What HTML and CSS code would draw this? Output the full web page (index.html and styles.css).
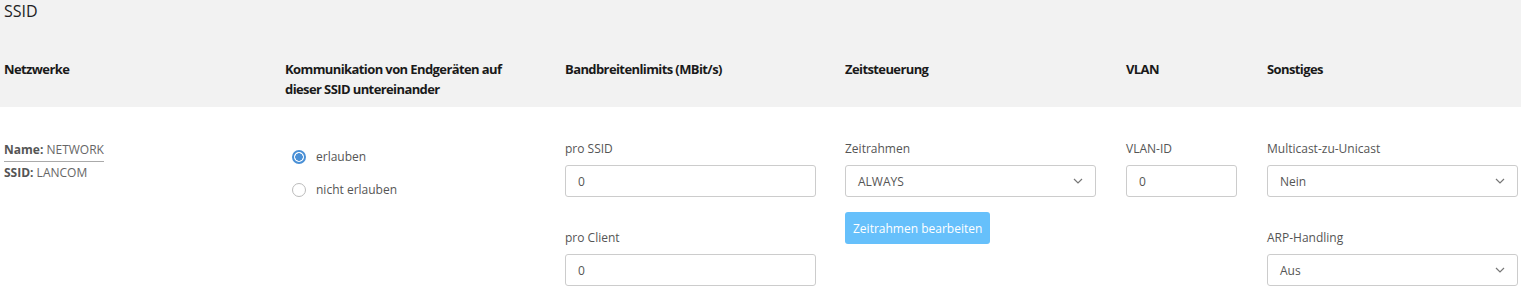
FILE: index.html
```html
<!DOCTYPE html>
<html lang="de">
<head>
  <meta charset="UTF-8" />
  <title>SSID</title>
  <link rel="stylesheet" href="styles.css">
</head>
<body>
  <div class="band">
    <h2 class="title">SSID</h2>
    <div class="cols head">
      <div>Netzwerke</div>
      <div>Kommunikation von Endgeräten auf<br>dieser SSID untereinander</div>
      <div>Bandbreitenlimits (MBit/s)</div>
      <div>Zeitsteuerung</div>
      <div>VLAN</div>
      <div>Sonstiges</div>
    </div>
  </div>

  <div class="cols body-row">
    <div class="net">
      <div class="net-name"><b>Name:</b> NETWORK</div>
      <div class="net-ssid"><b>SSID:</b> LANCOM</div>
    </div>

    <div class="radios">
      <label class="radio"><span class="dot on"></span>erlauben</label>
      <label class="radio"><span class="dot"></span>nicht erlauben</label>
    </div>

    <div class="fields">
      <div class="field">
        <div class="lbl">pro SSID</div>
        <div class="box">0</div>
      </div>
      <div class="field">
        <div class="lbl">pro Client</div>
        <div class="box">0</div>
      </div>
    </div>

    <div class="fields">
      <div class="field">
        <div class="lbl">Zeitrahmen</div>
        <div class="box select">ALWAYS
          <svg width="10" height="6" viewBox="0 0 10 6"><path d="M1 1l4 4 4-4" fill="none" stroke="#777" stroke-width="1.2"/></svg>
        </div>
        <button class="btn">Zeitrahmen bearbeiten</button>
      </div>
    </div>

    <div class="fields">
      <div class="field">
        <div class="lbl">VLAN-ID</div>
        <div class="box small">0</div>
      </div>
    </div>

    <div class="fields">
      <div class="field">
        <div class="lbl">Multicast-zu-Unicast</div>
        <div class="box select">Nein
          <svg width="10" height="6" viewBox="0 0 10 6"><path d="M1 1l4 4 4-4" fill="none" stroke="#777" stroke-width="1.2"/></svg>
        </div>
      </div>
      <div class="field">
        <div class="lbl">ARP-Handling</div>
        <div class="box select">Aus
          <svg width="10" height="6" viewBox="0 0 10 6"><path d="M1 1l4 4 4-4" fill="none" stroke="#777" stroke-width="1.2"/></svg>
        </div>
      </div>
    </div>
  </div>
</body>
</html>
```

FILE: styles.css
```css
html, body {
  margin: 0;
  padding: 0;
  background: #fff;
  font-family: 'Open Sans', sans-serif;
  font-size: 12px;
  color: #555;
}
* { box-sizing: border-box; }

.band {
  background: #f2f2f2;
  height: 107px;
  padding: 0 0 0 4px;
}

.title {
  margin: 0;
  font-size: 16px;
  font-weight: 400;
  line-height: 22px;
  color: #222;
}

.cols {
  display: grid;
  grid-template-columns: 281px 280px 280px 281px 141px 1fr;
}

.head {
  margin-top: 37px;
  font-size: 13px;
  font-weight: 700;
  letter-spacing: -0.6px;
  line-height: 20px;
  color: #1a1a1a;
}

.body-row {
  padding: 34px 0 0 4px;
}

.net {
  line-height: 16px;
  color: #666;
}
.net b { color: #555; }
.net-name {
  display: inline-block;
  padding: 1px 0 3px;
  border-bottom: 1px solid #aaa;
}
.net-ssid { padding-top: 3px; }

.radios {
  padding: 8px 0 0 7px;
  display: flex;
  flex-direction: column;
  gap: 17px;
}
.radio {
  display: flex;
  align-items: center;
  gap: 10px;
  line-height: 16px;
  color: #555;
}
.dot {
  width: 14px;
  height: 14px;
  border-radius: 50%;
  border: 1px solid #bbb;
  background: #fff;
}
.dot.on {
  border: 2px solid #4a90d6;
  background: radial-gradient(circle, #4a90d6 0 3.5px, #fff 4px);
}

.fields {
  display: flex;
  flex-direction: column;
  gap: 33px;
}
.lbl {
  line-height: 16px;
  margin-bottom: 8px;
  color: #555;
}
.box {
  width: 251px;
  height: 32px;
  border: 1px solid #ccc;
  border-radius: 3px;
  padding: 0 12px;
  display: flex;
  align-items: center;
  justify-content: space-between;
  color: #555;
  background: #fff;
}
.box.small { width: 111px; }

.btn {
  display: block;
  margin-top: 15px;
  height: 32px;
  padding: 0 8px;
  border: none;
  border-radius: 3px;
  background: #66c0fb;
  color: #fff;
  font-family: 'Open Sans', sans-serif;
  font-size: 12px;
}
```
